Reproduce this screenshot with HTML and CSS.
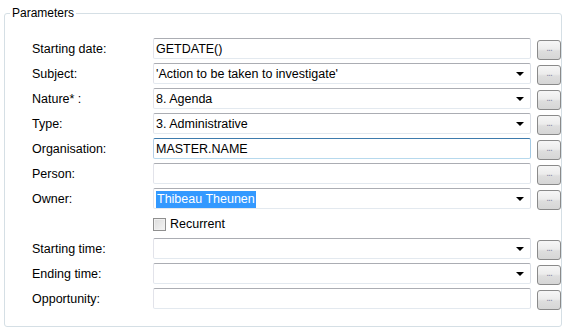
FILE: index.html
```html
<!DOCTYPE html>
<html>
<head>
<meta name="viewport" content="width=device-width, initial-scale=1">
<link rel="stylesheet" href="styles.css">
</head>
<body>

<fieldset class="params">
  <legend>Parameters</legend>
  <div class="grid">
    <label>Starting date:</label>
    <div class="field">GETDATE()</div>
    <button type="button" class="dots">...</button>

    <label>Subject:</label>
    <div class="field combo">'Action to be taken to investigate'<span class="arrow"></span></div>
    <button type="button" class="dots">...</button>

    <label>Nature* :</label>
    <div class="field combo">8. Agenda<span class="arrow"></span></div>
    <button type="button" class="dots">...</button>

    <label>Type:</label>
    <div class="field combo">3. Administrative<span class="arrow"></span></div>
    <button type="button" class="dots">...</button>

    <label>Organisation:</label>
    <div class="field focus">MASTER.NAME</div>
    <button type="button" class="dots">...</button>

    <label>Person:</label>
    <div class="field"></div>
    <button type="button" class="dots">...</button>

    <label>Owner:</label>
    <div class="field combo"><span class="sel">Thibeau Theunen</span><span class="arrow"></span></div>
    <button type="button" class="dots">...</button>

    <span></span>
    <div class="check"><span class="box"></span>Recurrent</div>
    <span></span>

    <label>Starting time:</label>
    <div class="field combo"><span class="arrow"></span></div>
    <button type="button" class="dots">...</button>

    <label>Ending time:</label>
    <div class="field combo"><span class="arrow"></span></div>
    <button type="button" class="dots">...</button>

    <label>Opportunity:</label>
    <div class="field"></div>
    <button type="button" class="dots">...</button>
  </div>
</fieldset>

</body>
</html>
```

FILE: styles.css
```css
body {
    margin: 0;
    background: #fff;
    font-family: "Liberation Sans", Arial, sans-serif;
    font-size: 12.5px;
    color: #000;
    overflow: hidden;
}

/* group box */
.params {
    margin: 6px 0 0 4px;
    width: 558px;
    box-sizing: border-box;
    height: 321px;
    border: 1px solid #d5dfe5;
    border-radius: 3px;
    padding: 18px 0 0 27px;
}

.params legend {
    padding: 0 2px;
    margin-left: -22px;
    font-size: 12px;
}

.grid {
    display: grid;
    grid-template-columns: 115px 378px 24px;
    grid-auto-rows: 21px;
    row-gap: 4px;
    column-gap: 6px;
    align-items: center;
}

/* text boxes and combos */
.field {
    position: relative;
    height: 21px;
    box-sizing: border-box;
    border: 1px solid;
    border-color: #abadb3 #dbdfe6 #e3e9ef #e2e3ea;
    border-radius: 2px;
    padding: 3px 2px 0 2px;
    white-space: nowrap;
}

.field.focus {
    border-color: #3d7bad #a4c9e3 #b7d9ed #b5cfe7;
}

.combo .arrow {
    position: absolute;
    right: 6px;
    top: 8px;
    border-left: 4px solid transparent;
    border-right: 4px solid transparent;
    border-top: 4px solid #000;
}

.sel {
    background: #3399ff;
    color: #fff;
    padding: 1px 1px 2px 1px;
}

/* ... buttons */
.dots {
    height: 20px;
    width: 24px;
    margin-top: 2px;
    padding: 0 0 4px 0;
    border: 1px solid #8a8a8a;
    border-radius: 3px;
    background: linear-gradient(#f6f6f6 0%, #ececec 45%, #dedede 55%, #d6d6d6 100%);
    color: #8c8ca8;
    font-family: "Liberation Sans", Arial, sans-serif;
    font-size: 10px;
    line-height: 14px;
    letter-spacing: -1px;
    text-align: center;
}

/* recurrent checkbox */
.check {
    display: flex;
    align-items: center;
    gap: 4px;
    margin-top: 1px;
}

.check .box {
    width: 11px;
    height: 11px;
    border: 1px solid #8f8f8f;
    background: linear-gradient(135deg, #dcdcdc, #f4f4f4);
    box-shadow: inset 0 0 0 1px #f0f0f0;
}
```
